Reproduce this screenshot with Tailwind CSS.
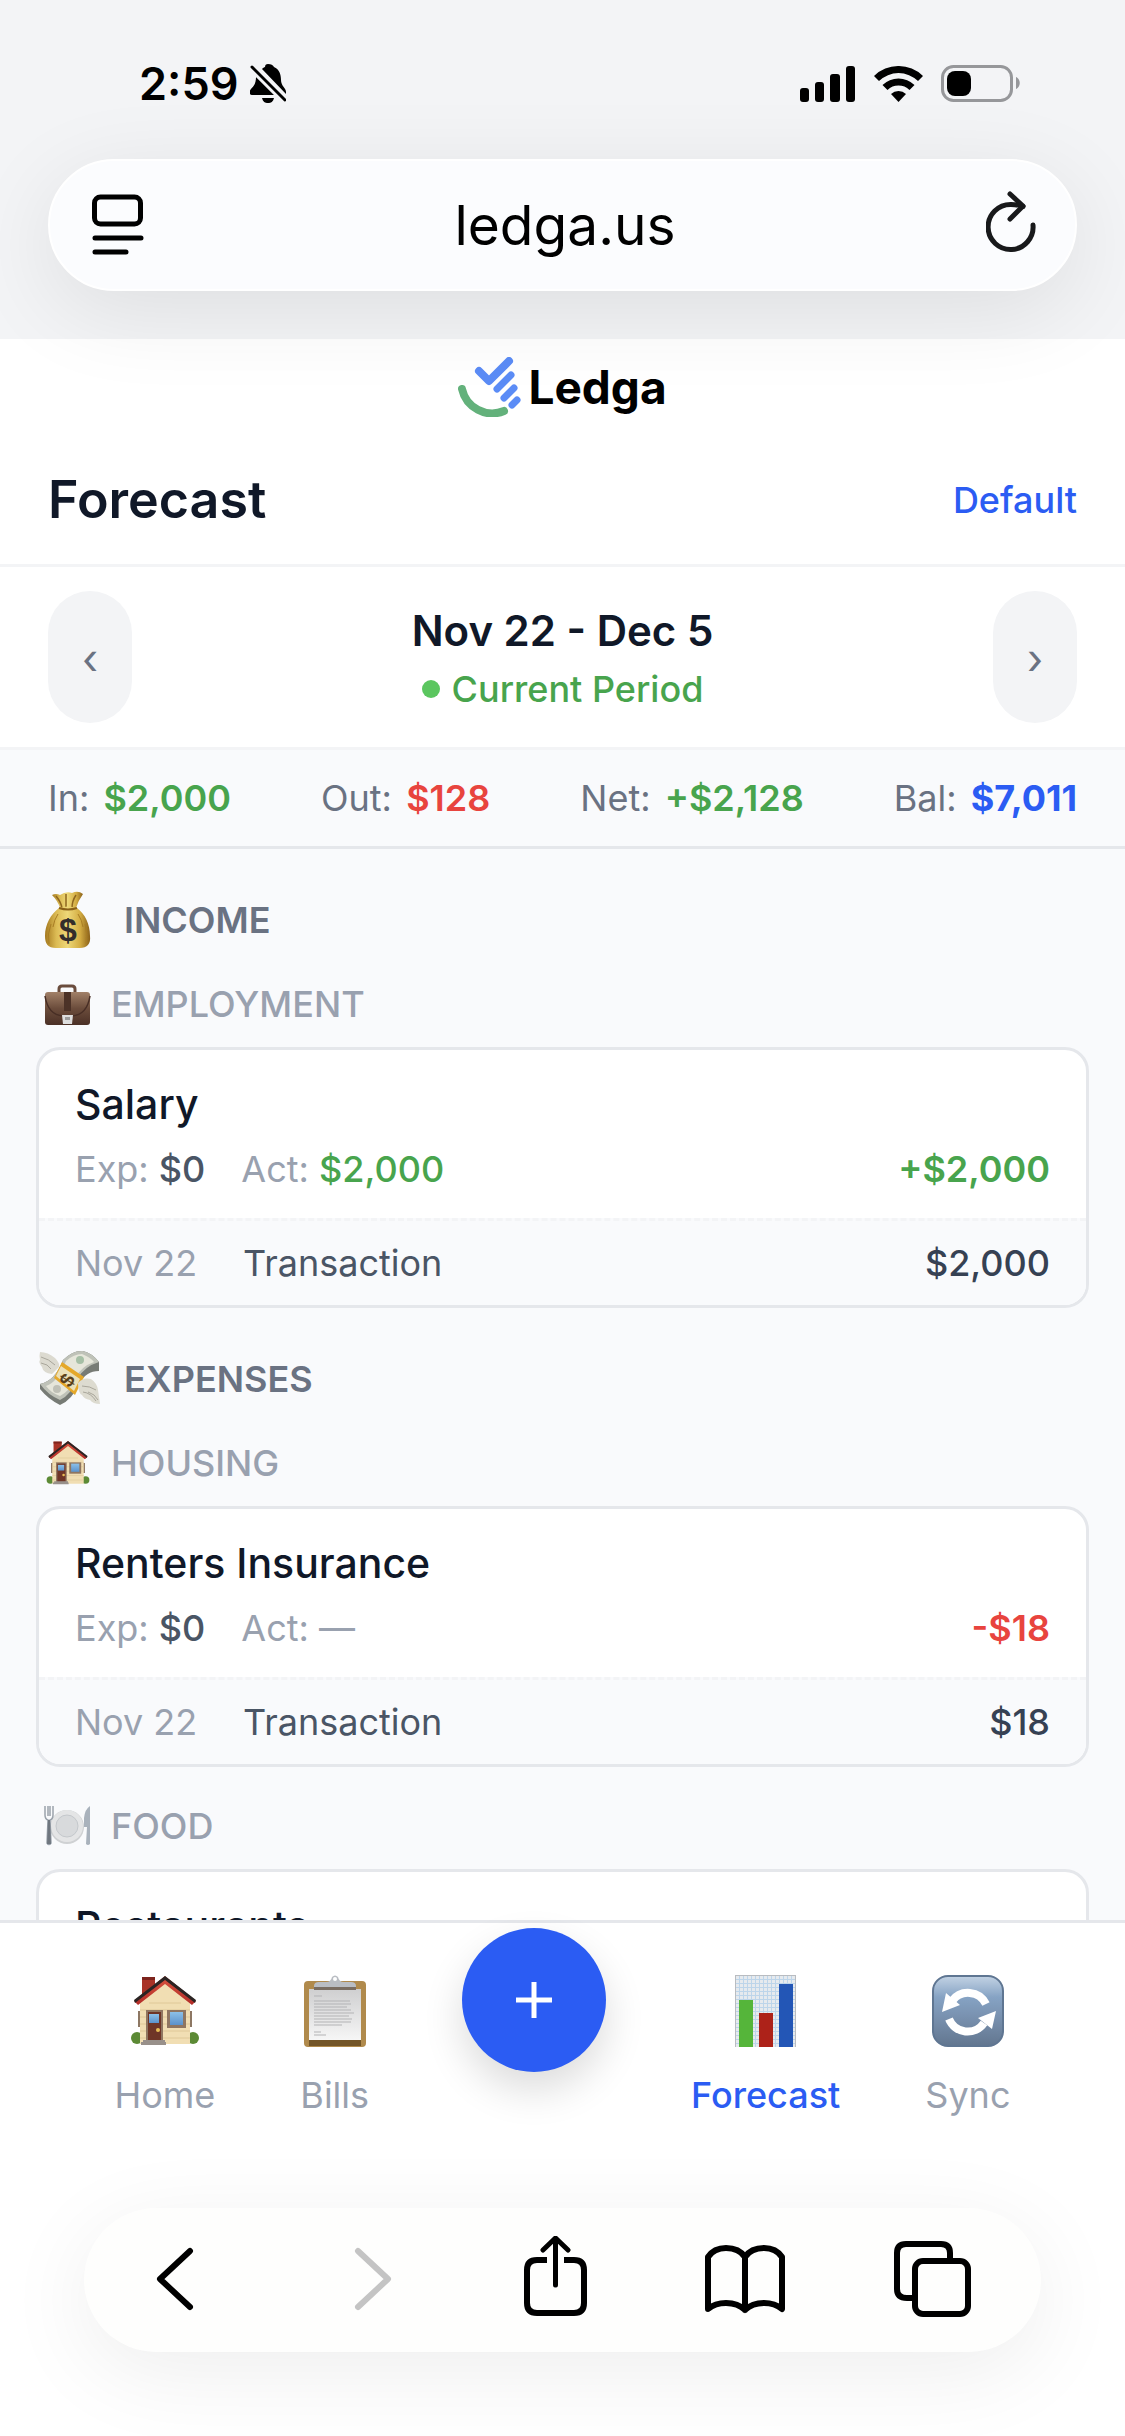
<!DOCTYPE html>
<html lang="en">
  <head>
    <meta charset="UTF-8" />
    <meta name="viewport" content="width=device-width, initial-scale=1.0" />
    <script src="https://cdn.jsdelivr.net/npm/@tailwindcss/browser@4"></script>
    <title>Ledga - Forecast</title>
  </head>
  <body
    class="flex flex-col h-screen overflow-hidden bg-white font-['Inter','Liberation_Sans',sans-serif] text-[36px] leading-[54px] text-gray-500"
  >
    <!-- shared emoji art -->
    <svg class="absolute size-0" aria-hidden="true">
      <defs>
        <linearGradient id="roof" x1="0" y1="0" x2="0" y2="1">
          <stop offset="0" stop-color="#d9543f" />
          <stop offset="1" stop-color="#b22c28" />
        </linearGradient>
        <linearGradient id="glass" x1="0" y1="0" x2="0" y2="1">
          <stop offset="0" stop-color="#8cc0e8" />
          <stop offset="1" stop-color="#5b92cc" />
        </linearGradient>
        <linearGradient id="gold" x1="0" y1="0" x2="1" y2="0">
          <stop offset="0" stop-color="#a5791f" />
          <stop offset="0.25" stop-color="#dcbb54" />
          <stop offset="0.5" stop-color="#eed878" />
          <stop offset="0.78" stop-color="#d3ac42" />
          <stop offset="1" stop-color="#8a6018" />
        </linearGradient>
        <linearGradient id="leather" x1="0" y1="0" x2="0" y2="1">
          <stop offset="0" stop-color="#a18068" />
          <stop offset="0.5" stop-color="#6b4c3b" />
          <stop offset="1" stop-color="#4b3026" />
        </linearGradient>
        <linearGradient id="paper" x1="0" y1="0" x2="0" y2="1">
          <stop offset="0" stop-color="#cfcfd0" />
          <stop offset="1" stop-color="#f6f6f6" />
        </linearGradient>
        <linearGradient id="steel" x1="0" y1="0" x2="0" y2="1">
          <stop offset="0" stop-color="#c3d3e4" />
          <stop offset="0.3" stop-color="#86a3c4" />
          <stop offset="0.6" stop-color="#7890ae" />
          <stop offset="1" stop-color="#62768f" />
        </linearGradient>
        <pattern id="grid" width="4" height="4" patternUnits="userSpaceOnUse">
          <rect width="4" height="4" fill="#e6eaee" />
          <path d="M0 .5H4M.5 0V4" stroke="#bdd5ea" />
        </pattern>
        <symbol id="house" viewBox="0 0 68 70">
          <rect x="11" y="1" width="13" height="22" fill="#a93327" />
          <path d="M11 1h13v3H11z" fill="#7d241d" />
          <circle cx="6" cy="62" r="6" fill="#5c8a35" />
          <circle cx="62" cy="62" r="6" fill="#5c8a35" />
          <path d="M7 35h4v16H7zM57 35h4v16h-4z" fill="#8d7763" />
          <path d="M9 68V27L34 5l25 22v41z" fill="#f1deb3" />
          <path d="M9 34h50M9 41h50M9 48h50M9 55h50M9 62h50M18 27h32" stroke="#dfc898" />
          <path d="M34 0 3 25l4 4L34 8l27 21 4-4z" fill="url(#roof)" />
          <path d="M34 0 3 24l1 3L34 4l30 23 1-3z" fill="#2b2423" />
          <rect x="15" y="34" width="17" height="31" fill="#8f7661" />
          <rect x="17" y="36" width="13" height="29" fill="#6f3527" />
          <rect x="18" y="38" width="10" height="9" fill="url(#glass)" />
          <circle cx="27" cy="54" r="2" fill="#e8bd55" />
          <rect x="36" y="34" width="19" height="18" fill="#8f7661" />
          <rect x="39" y="36" width="13" height="13" fill="url(#glass)" />
          <path d="M12 64h22v2h1v3H10v-3h2z" fill="#98908a" />
        </symbol>
      </defs>
    </svg>

    <!-- browser chrome -->
    <div class="relative z-10 bg-gray-100 pb-12">
      <div class="flex items-center justify-between pt-14 pb-12 pl-[139px] pr-[104px] text-black">
        <div class="flex items-center gap-3">
          <span class="text-[45px] leading-[55px] font-semibold">2:59</span>
          <svg class="w-9 h-10" viewBox="0 0 36 40" aria-label="Silent">
            <path
              d="M18 0c3 0 5 1 6 3 5 2 7 7 7 13 0 6 5 8 5 12v2L12 5c1-1 2-2 3-2 0-2 1-3 3-3zM6 13l18 18H2c-3 0-3-4-1-6 3-3 5-6 5-12zM12 34h12c-1 4-3 5-6 5s-5-1-6-5z"
            />
            <path d="M2 3 35 36" fill="none" stroke="#f3f4f6" stroke-width="8" />
            <path d="M2 3 35 36" fill="none" stroke="#000" stroke-width="3" stroke-linecap="round" />
          </svg>
        </div>
        <div class="flex items-center gap-[18px]">
          <svg class="w-14 h-9" viewBox="0 0 56 36" aria-label="Signal">
            <rect x="0" y="22" width="9" height="14" rx="3" />
            <rect x="15" y="16" width="9" height="20" rx="3" />
            <rect x="30" y="8" width="10" height="28" rx="3" />
            <rect x="46" y="0" width="9" height="36" rx="3" />
          </svg>
          <svg class="w-[49px] h-9" viewBox="0 0 49 36" aria-label="Wi-Fi">
            <path d="M0 10a35 35 0 0 1 49 0l-5 5a28 28 0 0 0-39 0z" />
            <path d="M8.500 19a23 23 0 0 1 32 0l-5 5a16 16 0 0 0-22 0z" />
            <path d="M17 28a11 11 0 0 1 15 0l-7.500 8z" />
          </svg>
          <svg class="w-20 h-[37px]" viewBox="0 0 80 37" aria-label="Battery">
            <rect x="1.500" y="1.500" width="69" height="34" rx="11" fill="none" stroke="#96979a" stroke-width="3" />
            <rect x="6" y="6" width="24" height="25" rx="8" />
            <path d="M75 12c5 2 5 10 0 12z" fill="#96979a" />
          </svg>
        </div>
      </div>

      <div
        class="flex items-center justify-between h-[132px] mx-12 pl-[42px] pr-[39px] rounded-full border-2 border-white bg-[#fbfcfe] shadow-[0_20px_90px_rgba(0,0,0,0.09)]"
      >
        <button aria-label="Page menu">
          <svg class="w-[52px] h-[62px]" viewBox="0 0 52 62" fill="none" stroke="#000" stroke-width="5" stroke-linecap="round">
            <rect x="2.500" y="3" width="46" height="27" rx="6" />
            <path d="M3 44h46M3 58h31" />
          </svg>
        </button>
        <input
          type="text"
          value="ledga.us"
          aria-label="Address"
          class="flex-1 min-w-0 text-center text-[55px] leading-[72px] text-black outline-none"
        />
        <button aria-label="Reload">
          <svg class="w-[50px] h-[68px]" viewBox="0 0 50 68" fill="none" stroke="#18191b" stroke-width="5" stroke-linecap="round" stroke-linejoin="round">
            <path d="M47 34A22.500 22.500 0 1 1 25 13.500q7 0 12 2" />
            <path d="M24 3 37 15 24 28" />
          </svg>
        </button>
      </div>
    </div>

    <header>
      <div class="flex items-center justify-center gap-1 py-[18px]">
        <svg class="w-[66px] h-[60px]" viewBox="0 0 66 60" fill="none" stroke-linecap="round" stroke-linejoin="round">
          <path d="M4 32A31 31 0 0 0 46 54" stroke="#63b17b" stroke-width="8" />
          <g stroke="#5b8cf6" stroke-width="8">
            <path d="M21 14 31 24 51 4" />
            <path d="M39 32 53 18M46 41 56 31M54 48 59 43" stroke-width="7" />
          </g>
        </svg>
        <span class="text-[46px] leading-[60px] font-bold text-black">Ledga</span>
      </div>
      <div class="flex items-center justify-between px-12 py-6 border-b-3 border-gray-100">
        <h1 class="text-[52px] leading-[81px] font-semibold text-gray-900">Forecast</h1>
        <a href="#" class="font-medium text-[#2b5cf3]">Default</a>
      </div>
    </header>

    <div class="flex items-center justify-between px-12 py-6 border-b-3 border-gray-100">
      <button aria-label="Previous period" class="w-[84px] h-[132px] pt-1 rounded-full bg-gray-100 text-[42px]">‹</button>
      <div class="text-center">
        <h2 class="text-[42px] leading-[63px] font-semibold text-gray-900">Nov 22 - Dec 5</h2>
        <p class="flex items-center justify-center gap-3 font-medium text-[#48a44d]">
          <span class="size-[18px] rounded-full bg-[#5bc65f]"></span>Current Period
        </p>
      </div>
      <button aria-label="Next period" class="w-[84px] h-[132px] pt-1 rounded-full bg-gray-100 text-[42px]">›</button>
    </div>

    <div class="flex justify-between px-12 py-[21px] bg-[#f9fafc] border-b-3 border-gray-200">
      <p>In: <span class="ml-1 font-semibold text-[#48a44d]">$2,000</span></p>
      <p>Out: <span class="ml-1 font-semibold text-[#e8443e]">$128</span></p>
      <p>Net: <span class="ml-1 font-semibold text-[#48a44d]">+$2,128</span></p>
      <p>Bal: <span class="ml-1 font-bold text-[#2b5cf3]">$7,011</span></p>
    </div>

    <main class="flex-1 min-h-0 overflow-hidden px-9 pt-[10px] bg-[#f9fafc]">
      <section class="pt-[26px]">
        <h3 class="flex items-center gap-6 h-[70px] font-semibold text-gray-500">
          <svg class="w-16 h-15" viewBox="0 0 64 60" aria-hidden="true">
            <path d="M16 5q4-2 8 0 6-4 12-2 6-3 11 1-5 7-7 14H24q-2-7-8-13z" fill="url(#gold)" />
            <path d="M20 6q5 6 6 12M30 4v14M40 5q-4 6-4 13" stroke="#8e661f" stroke-width="1.500" fill="none" />
            <path d="M23 18q9-3 18 0c8 6 13 16 13 28 1 8-3 12-10 12H20c-8 0-11-4-11-12 0-12 6-22 14-28z" fill="url(#gold)" />
            <path d="M23 18q9 3 18 0" stroke="#8a6018" stroke-width="2" fill="none" />
            <path d="M15 34q-4 10-2 20M49 34q3 10 1 20M22 24q-4 6-5 13M42 24q4 6 5 13" stroke="#a87d24" fill="none" />
            <text x="32" y="51" text-anchor="middle" font-family="Liberation Sans" font-weight="700" font-size="32" fill="#322d2b">$</text>
          </svg>
          INCOME
        </h3>
        <div>
          <h4 class="flex items-center gap-[19px] pt-[22px] pb-4 font-medium text-gray-400">
            <svg class="w-14 h-12" viewBox="0 0 56 48" aria-hidden="true">
              <path d="M23 13V9q0-3 3-3h10q3 0 3 3v4" fill="none" stroke="#6a4c3d" stroke-width="3" />
              <rect x="9" y="12" width="45" height="33" rx="3" fill="url(#leather)" />
              <path d="M9 16q3 19 18 20h9q15-1 18-20" fill="none" stroke="#482e25" stroke-width="1.500" />
              <rect x="28" y="12" width="7" height="19" fill="#4c3227" />
              <path d="M26 35h11l-1 9h-9z" fill="#dedede" />
              <path d="M29 37h5v3h-5z" fill="#9c9c9c" />
            </svg>
            EMPLOYMENT
          </h4>
          <article class="mb-[10px] rounded-3xl border-3 border-gray-200 bg-white overflow-hidden">
            <div class="px-9 pt-6 pb-[22px]">
              <h5 class="mb-2 text-[41px] leading-[60px] font-medium text-gray-900">Salary</h5>
              <div class="flex gap-9 text-gray-400">
                <span>Exp: <span class="font-medium text-gray-600">$0</span></span>
                <span>Act: <span class="font-medium text-[#48a44d]">$2,000</span></span>
                <span class="ml-auto font-semibold text-[#48a44d]">+$2,000</span>
              </div>
            </div>
            <div class="flex px-9 py-[15px] border-t-3 border-dashed border-gray-100 bg-[#f9fafc]">
              <span class="w-[168px] text-gray-400">Nov 22</span>
              <span class="text-gray-600">Transaction</span>
              <span class="ml-auto font-medium text-gray-700">$2,000</span>
            </div>
          </article>
        </div>
      </section>

      <section class="pt-[26px]">
        <h3 class="flex items-center gap-6 h-[70px] font-semibold text-gray-500">
          <svg class="w-16 h-15" viewBox="0 0 64 60" aria-hidden="true">
            <path d="M4 3q8 0 15 6 5 5 4 9l-7 7q-9-1-10-7-4-5-2-7-1-4 0-8z" fill="#dcdad0" />
            <path d="M5 8q8 2 14 8M5 14q7 1 10 6" stroke="#a9a69b" fill="none" />
            <path d="M27 11q10-10 20-9 9 2 16 11v9Q50 22 43 35 36 51 24 56 12 50 4 40v-5Q19 32 27 11z" fill="#777b75" />
            <path d="M27 11q10-10 20-9 9 2 16 11Q49 17 41 30 35 46 24 51 12 46 4 35q15-3 23-24z" fill="#bfc2b8" />
            <path d="M30 12q8-7 16-7 8 3 12 8-12 4-19 16-6 14-15 18-9-3-14-10 12-4 20-25z" fill="#e6e6da" />
            <circle cx="44" cy="11" r="4" fill="#a6bfa5" />
            <circle cx="21" cy="40" r="4" fill="#bfc0b6" />
            <path d="m26 13 22 15-9 18-21-17z" fill="#e5a829" />
            <path d="m25 17 19 13-6 12-18-15z" fill="#ebe0b8" />
            <text x="31" y="38" text-anchor="middle" transform="rotate(-58 31 31)" font-family="Liberation Sans" font-weight="700" font-size="20" fill="#59401a">$</text>
            <path d="M42 34q5-6 13-4 6 4 7 11l2 14q-7 0-10-4-6-1-8-5-4-2-4-12z" fill="#dddbd0" />
            <path d="M46 37q8 0 14 4M47 43q8 1 13 9M52 43q7 2 10 8" stroke="#a9a69b" fill="none" />
          </svg>
          EXPENSES
        </h3>
        <div>
          <h4 class="flex items-center gap-[19px] pt-[22px] pb-4 font-medium text-gray-400">
            <svg class="w-14 h-11 pl-2" aria-hidden="true"><use href="#house" /></svg>
            HOUSING
          </h4>
          <article class="mb-[10px] rounded-3xl border-3 border-gray-200 bg-white overflow-hidden">
            <div class="px-9 pt-6 pb-[22px]">
              <h5 class="mb-2 text-[41px] leading-[60px] font-medium text-gray-900">Renters Insurance</h5>
              <div class="flex gap-9 text-gray-400">
                <span>Exp: <span class="font-medium text-gray-600">$0</span></span>
                <span>Act: —</span>
                <span class="ml-auto font-semibold text-[#e8443e]">-$18</span>
              </div>
            </div>
            <div class="flex px-9 py-[15px] border-t-3 border-dashed border-gray-100 bg-[#f9fafc]">
              <span class="w-[168px] text-gray-400">Nov 22</span>
              <span class="text-gray-600">Transaction</span>
              <span class="ml-auto font-medium text-gray-700">$18</span>
            </div>
          </article>
        </div>
        <div>
          <h4 class="flex items-center gap-[19px] pt-[22px] pb-4 font-medium text-gray-400">
            <svg class="w-14 h-10" viewBox="0 0 56 40" aria-hidden="true">
              <ellipse cx="31" cy="21" rx="17" ry="17" fill="#cfd1d3" />
              <ellipse cx="31" cy="20" rx="16" ry="16" fill="#e4e5e6" />
              <circle cx="31" cy="20" r="11" fill="#d8dadc" stroke="#c4c8cc" />
              <path d="M9 0v9q0 4 3 5l-1 23q2 3 4 0l-1-23q3-1 3-5V0M12 0v10M14 0v10" fill="none" stroke="#9aa2ab" stroke-width="1.500" />
              <path d="M12 14h2l1 24h-4z" fill="#6f767f" />
              <path d="M54 0q-5 3-6 12v9h3l-1 17q2 2 4 0z" fill="#a9b2bc" />
            </svg>
            FOOD
          </h4>
          <article class="rounded-3xl border-3 border-gray-200 bg-white overflow-hidden">
            <div class="px-9 pt-6 pb-[22px]">
              <h5 class="text-[41px] leading-[60px] font-medium text-gray-900">Restaurants</h5>
            </div>
          </article>
        </div>
      </section>
    </main>

    <nav class="flex items-start justify-around px-[72px] pt-[52px] border-t-3 border-gray-200 bg-white text-gray-400">
      <a href="#" class="flex flex-col items-center gap-[21px]">
        <svg class="w-[68px] h-[72px]" aria-hidden="true"><use href="#house" /></svg>
        Home
      </a>
      <a href="#" class="flex flex-col items-center gap-[21px]">
        <svg class="w-[62px] h-[72px]" viewBox="0 0 62 72" aria-hidden="true">
          <rect x="0" y="6" width="62" height="66" rx="4" fill="#b08a4c" />
          <path d="M5 65h52v6H5z" fill="#735527" />
          <path d="M5 14h52v51H5z" fill="url(#paper)" />
          <path
            d="M10 21h8M10 26h36M10 29h37M10 32h33M10 35h37M10 38h40M10 41h35M10 44h38M10 47h37M10 50h28M10 57h7M10 60h12"
            stroke="#b3b3b5"
          />
          <path d="M10 15v-4q0-4 5-4h7q5 0 6-5 3-3 6 0 1 5 6 5h7q5 0 5 4v4z" fill="#b9bdc3" />
          <path d="M10 12h42v3H10z" fill="#796d62" />
          <circle cx="31" cy="4" r="2" fill="#fff" />
        </svg>
        Bills
      </a>
      <button
        aria-label="Add"
        class="flex items-center justify-center size-36 -mt-[47px] ml-2 rounded-full bg-[#2b5cf3] shadow-[0_18px_40px_rgba(0,0,0,0.14)]"
      >
        <svg class="size-9" viewBox="0 0 36 36" stroke="#fff" stroke-width="5" aria-hidden="true">
          <path d="M0 18H36M18 0V36" />
        </svg>
      </button>
      <a href="#" aria-current="page" class="flex flex-col items-center gap-[21px] font-medium text-[#2b5cf3]">
        <svg class="w-[61px] h-[72px]" viewBox="0 0 61 72" aria-hidden="true">
          <rect width="61" height="72" fill="url(#grid)" />
          <path d="M.5 0V72M60.500 0V72M0 .5H61" stroke="#b9bcc0" />
          <rect x="4" y="25" width="14" height="47" fill="#55b53a" />
          <rect x="24" y="38" width="14" height="34" fill="#ad2219" />
          <rect x="44" y="9" width="14" height="63" fill="#2356b6" />
        </svg>
        Forecast
      </a>
      <a href="#" class="flex flex-col items-center gap-[21px]">
        <svg class="size-[72px]" viewBox="0 0 72 72" aria-hidden="true">
          <rect x="1" y="1" width="70" height="70" rx="15" fill="url(#steel)" stroke="#5f7692" stroke-width="2" />
          <g fill="none" stroke="#fff" stroke-width="8">
            <path d="M54 29A20 20 0 0 0 20 26" />
            <path d="M17 44a20 20 0 0 0 35 4" />
          </g>
          <path d="m14 18 14 12-18 7zM64 36l-4 18-14-11z" fill="#fff" />
        </svg>
        Sync
      </a>
    </nav>

    <!-- browser toolbar -->
    <div class="px-[84px] pt-[86px] pb-[84px]">
      <div
        class="flex items-center justify-between h-36 pl-[43px] pr-[61px] rounded-full bg-[#fefefd] shadow-[0_20px_90px_rgba(0,0,0,0.07)]"
      >
        <button aria-label="Back">
          <svg class="w-24 h-[88px]" viewBox="0 0 96 88" fill="none" stroke="#000" stroke-width="6" stroke-linecap="round" stroke-linejoin="round">
            <path d="M63 15 33 43l30 28" />
          </svg>
        </button>
        <button aria-label="Forward" disabled>
          <svg class="w-24 h-[88px]" viewBox="0 0 96 88" fill="none" stroke="#c4c4c4" stroke-width="6" stroke-linecap="round" stroke-linejoin="round">
            <path d="m42 15 30 28-30 28" />
          </svg>
        </button>
        <button aria-label="Share">
          <svg class="w-24 h-[88px]" viewBox="0 0 96 88" fill="none" stroke="#000" stroke-width="6">
            <path d="M41 24H31q-10 0-10 10v33q0 10 10 10h37q10 0 10-10V34q0-10-10-10H58" />
            <path d="M49.500 49V3M37 14 49.500 2 62 14" stroke-width="5" stroke-linecap="round" stroke-linejoin="round" />
          </svg>
        </button>
        <button aria-label="Bookmarks">
          <svg class="w-24 h-[88px]" viewBox="0 0 96 88" fill="none" stroke="#000" stroke-width="6" stroke-linecap="round" stroke-linejoin="round">
            <path d="M50 21q-6-9-19-9-12 0-18 9v52q7-6 18-6 12 0 19 7 7-7 19-7 11 0 18 6V21q-6-9-18-9-13 0-19 9v53" />
          </svg>
        </button>
        <button aria-label="Tabs">
          <svg class="w-24 h-[88px]" viewBox="0 0 96 88" fill="none" stroke="#000" stroke-width="6" stroke-linejoin="round">
            <rect x="31" y="25" width="53" height="53" rx="8" />
            <path d="M31 62h-8q-10 0-10-9V17q0-9 9-9h35q9 0 9 9v8" />
          </svg>
        </button>
      </div>
    </div>
  </body>
</html>
